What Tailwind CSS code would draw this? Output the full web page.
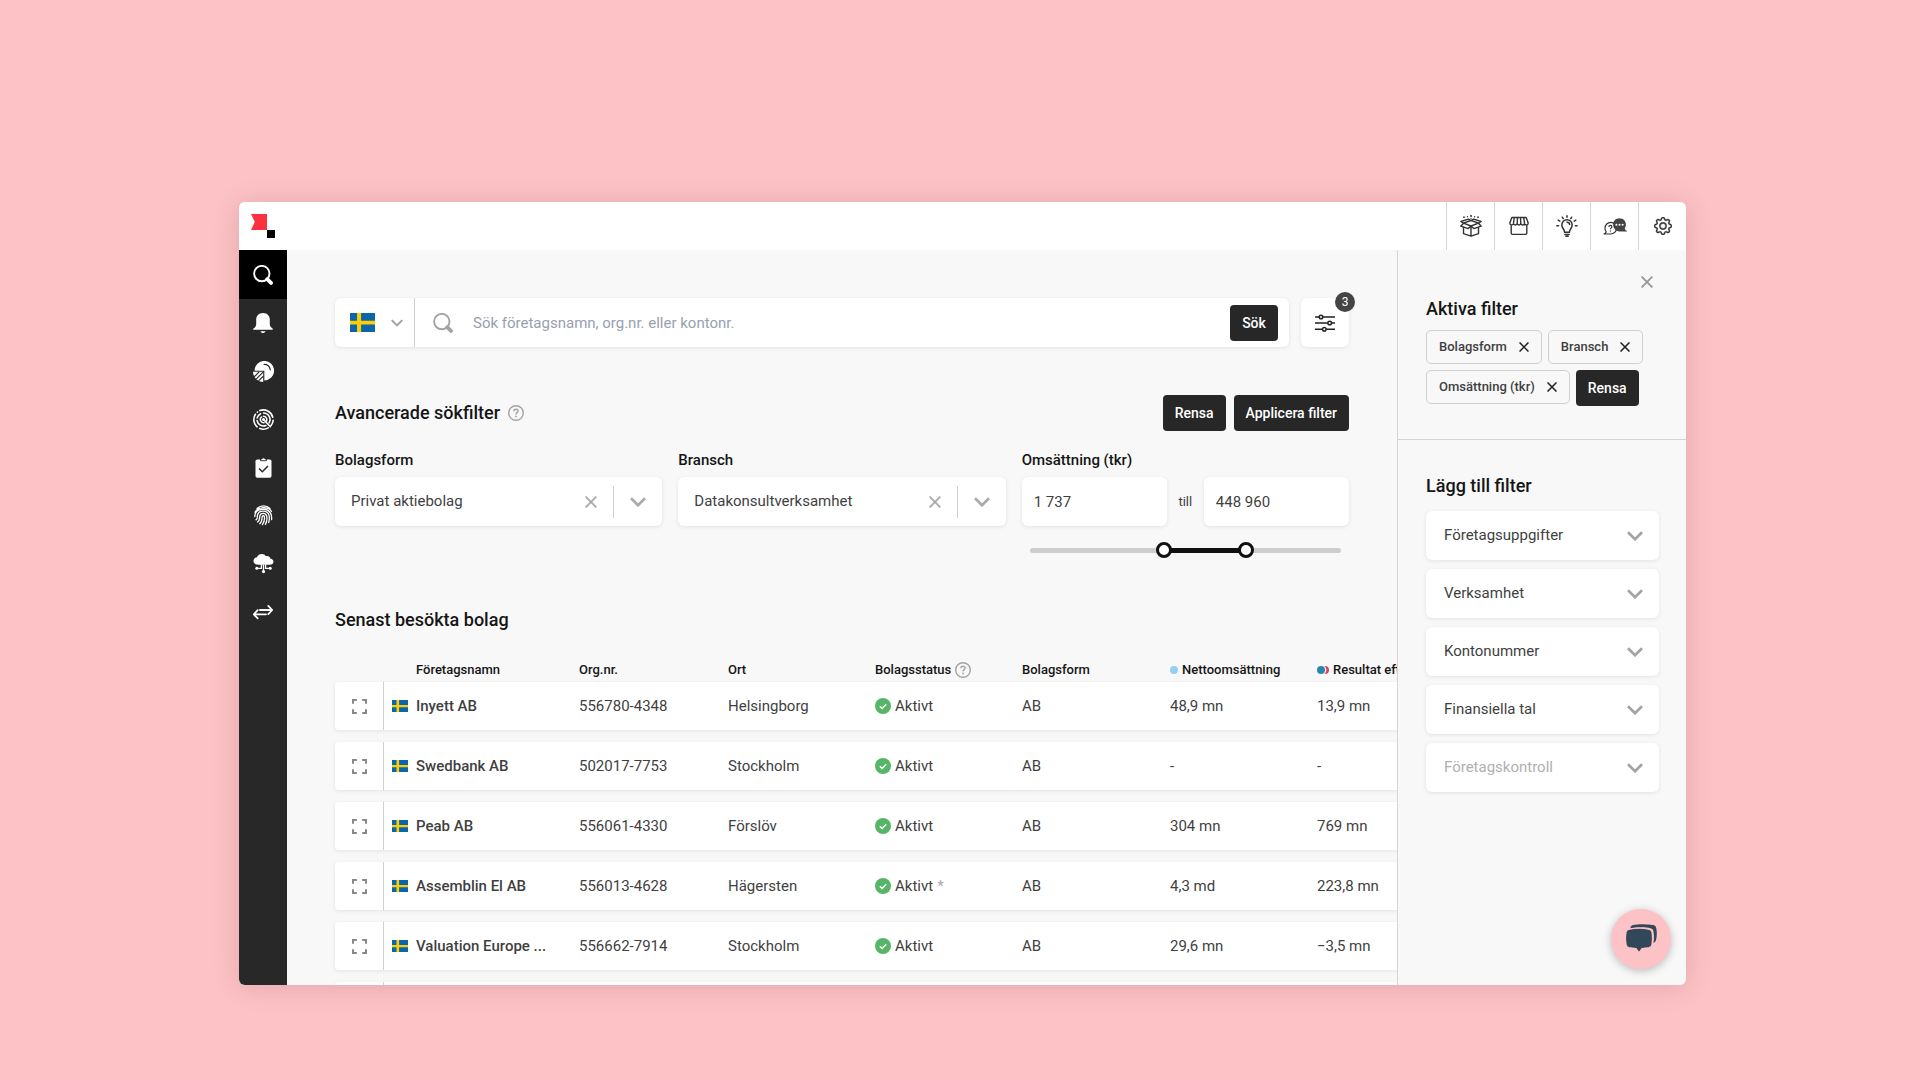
<!DOCTYPE html>
<html lang="sv">
<head>
<meta charset="utf-8">
<meta name="viewport" content="width=device-width, initial-scale=1">
<title>Sök företag</title>
<script src="https://cdn.jsdelivr.net/npm/@tailwindcss/browser@4"></script>
</head>
<body class="flex h-screen bg-[#fdc2c6] pt-[202px] pr-[234px] pb-[95px] pl-[239px] font-[Roboto,sans-serif] text-[15px] text-[#3f3f3f]">

<svg class="hidden" aria-hidden="true">
  <symbol id="flag" viewBox="0 0 16 12" preserveAspectRatio="none"><path fill="#0b65ab" d="M0 0h16v12H0z"/><path fill="#fecd05" d="M4.500 0h2.600v12H4.500zM0 4.900h16v2.300H0z"/></symbol>
  <symbol id="search" viewBox="0 0 20 20"><circle cx="8.800" cy="8.600" r="7.700" fill="none" stroke="currentColor" stroke-width="1.900"/><path d="M14.200 14.200 18 17.900" stroke="currentColor" stroke-width="3.800" stroke-linecap="round"/></symbol>
  <symbol id="chev" viewBox="0 0 16 10"><path d="m1 1.200 7 7 7-7" fill="none" stroke="currentColor" stroke-width="2.700"/></symbol>
  <symbol id="x" viewBox="0 0 12 12"><path d="m.6.6 10.800 10.800M11.400.6.6 11.400" fill="none" stroke="currentColor" stroke-width="1.900"/></symbol>
  <symbol id="help" viewBox="0 0 16 16"><circle cx="8" cy="8" r="7.300" fill="none" stroke="currentColor" stroke-width="1.400"/><path d="M5.900 6.300c0-1.300.9-2.100 2.100-2.100s2.100.8 2.100 1.900c0 1.500-2.100 1.600-2.100 3.300" fill="none" stroke="currentColor" stroke-width="1.400"/><circle cx="8" cy="11.400" r=".9" fill="currentColor"/></symbol>
  <symbol id="expand" viewBox="0 0 15 15"><path d="M1 4.800V1h3.800M10.200 1H14v3.800M14 10.200V14h-3.800M4.800 14H1v-3.800" fill="none" stroke="currentColor" stroke-width="2"/></symbol>
  <symbol id="ok" viewBox="0 0 16 16"><circle cx="8" cy="8" r="8" fill="#56b567"/><path d="m4.800 8.200 2.300 2.300 4.100-4.300" fill="none" stroke="#fff" stroke-width="1.500"/></symbol>
</svg>

<div class="flex min-w-0 flex-1 flex-col overflow-hidden rounded-md bg-[#f8f8f8] shadow-[0_2px_28px_rgba(60,0,0,0.14)]">
  <header class="flex h-12 shrink-0 items-stretch justify-between bg-white">
    <a href="#" aria-label="Startsida" class="py-3 pl-3">
      <svg class="size-6" viewBox="0 0 24 24"><path fill="#fa323f" d="M0 0h16v16H0l3.800-8z"/><path d="M16 16h8v8h-8z"/></svg>
    </a>
    <nav class="flex text-[#333]" aria-label="Verktyg">
      <button aria-label="Produkter" class="flex w-12 items-center justify-center border-l border-[#d4d4d4]">
        <svg class="size-[22px]" viewBox="0 0 22 22" fill="none" stroke="currentColor" stroke-width="1.400" stroke-linejoin="round"><path d="M3.500 8.200 11 5.500l7.500 2.700L11 11zM3.500 8.200.8 6.500 8.500 4.200 11 5.500l2.500-1.300 7.700 2.300-2.700 1.700M3.500 8.200.8 11.200l7.400 2.400L11 11l2.800 2.600 7.400-2.400-2.700-3M3.500 12.400v6.200l7.500 2.600 7.500-2.600v-6.200M11 11v10.200"/><g fill="currentColor" stroke="none"><circle cx="4" cy="2.200" r=".9"/><circle cx="7.400" cy="1.700" r=".7"/><circle cx="11" cy="1" r="1"/><circle cx="14.600" cy="1.700" r=".7"/><circle cx="18" cy="2.200" r=".9"/><circle cx="11" cy="3.400" r=".6"/></g></svg>
      </button>
      <button aria-label="Butik" class="flex w-12 items-center justify-center border-l border-[#d4d4d4]">
        <svg class="size-5" viewBox="0 0 20 20" fill="none" stroke="currentColor" stroke-width="1.400" stroke-linejoin="round"><path d="M2.800 1.500h14.400l2 5.500c0 2.500-3.500 2.500-3.700.2-.2 2.300-3.500 2.300-3.700 0-.2 2.300-3.400 2.300-3.600 0-.2 2.300-3.500 2.300-3.700 0C4.300 9.500.8 9.500.8 7zM5.300 1.500 4.500 7.200M8.500 1.500l-.3 5.700M11.500 1.500l.3 5.700M14.700 1.500l.8 5.700M2.200 8.800v8.300c0 .8.500 1.300 1.300 1.300h13c.8 0 1.300-.5 1.300-1.300V8.800"/></svg>
      </button>
      <button aria-label="Tips" class="flex w-12 items-center justify-center border-l border-[#d4d4d4]">
        <svg class="size-[22px]" viewBox="0 0 22 22" fill="none" stroke="currentColor" stroke-width="1.500" stroke-linecap="round"><path d="M8.600 17.200c0-3.200-2.800-3.800-2.800-7.200a5.200 5.200 0 0 1 10.400 0c0 3.400-2.800 4-2.800 7.200zM8.900 19.500h4.200M9.900 21.300h2.200M11 7.200c1.500 0 2.500.9 2.700 2.300M11 .8v1.500M6.300 2.200l.9 1.400M15.700 2.200l-.9 1.400M2.200 5.200l1.600.9M19.800 5.200l-1.600.9M.9 10.800h1.700M19.400 10.800h1.700"/></svg>
      </button>
      <button aria-label="Support" class="flex w-12 items-center justify-center border-l border-[#d4d4d4]">
        <svg class="h-[17px] w-6" viewBox="0 0 24 17"><path d="M1 16h6.500c3.500 0 6-2.500 6-5.700S11 4.300 7.800 4.300 2 6.900 2 10.200c0 1.500.4 2.700 1.200 3.700C2.700 15 2 15.600 1 16z" fill="#fff" stroke="currentColor" stroke-width="1.200" stroke-linejoin="round"/><path d="M5.900 8.900c0-1 .7-1.600 1.500-1.600s1.500.6 1.500 1.400c0 1.100-1.500 1.200-1.500 2.500M7.400 12.400v1.100" fill="none" stroke="currentColor" stroke-width="1.200"/><path d="M16.500.3c3.600 0 6.400 2.800 6.400 6.300 0 1.500-.5 2.800-1.200 3.800.4 1.200 1.200 1.900 2.300 2.500v.5h-7.500c-3.600 0-6.400-3-6.400-6.800 0-3.500 2.800-6.300 6.400-6.300z" fill="#444"/><g fill="#fff"><circle cx="13.400" cy="6.800" r="1"/><circle cx="16.500" cy="6.800" r="1"/><circle cx="19.600" cy="6.800" r="1"/></g></svg>
      </button>
      <button aria-label="Inställningar" class="flex w-12 items-center justify-center border-l border-[#d4d4d4]">
        <svg class="size-[18px]" viewBox="0 0 16 16" fill="currentColor" stroke="currentColor" stroke-width=".4"><path d="M8 4.754a3.246 3.246 0 1 0 0 6.492 3.246 3.246 0 0 0 0-6.492zM5.754 8a2.246 2.246 0 1 1 4.492 0 2.246 2.246 0 0 1-4.492 0z"/><path d="M9.796 1.343c-.527-1.790-3.065-1.790-3.592 0l-.094.319a.873.873 0 0 1-1.255.52l-.292-.16c-1.640-.892-3.433.902-2.540 2.541l.159.292a.873.873 0 0 1-.52 1.255l-.319.094c-1.790.527-1.790 3.065 0 3.592l.319.094a.873.873 0 0 1 .52 1.255l-.16.292c-.892 1.640.901 3.434 2.541 2.540l.292-.159a.873.873 0 0 1 1.255.52l.094.319c.527 1.790 3.065 1.790 3.592 0l.094-.319a.873.873 0 0 1 1.255-.52l.292.16c1.640.893 3.434-.902 2.540-2.541l-.159-.292a.873.873 0 0 1 .52-1.255l.319-.094c1.790-.527 1.790-3.065 0-3.592l-.319-.094a.873.873 0 0 1-.52-1.255l.16-.292c.893-1.640-.902-3.433-2.541-2.540l-.292.159a.873.873 0 0 1-1.255-.52l-.094-.319zm-2.633.283c.246-.835 1.428-.835 1.674 0l.094.319a1.873 1.873 0 0 0 2.693 1.115l.291-.16c.764-.415 1.600.42 1.184 1.185l-.159.292a1.873 1.873 0 0 0 1.116 2.692l.318.094c.835.246.835 1.428 0 1.674l-.319.094a1.873 1.873 0 0 0-1.115 2.693l.16.291c.415.764-.42 1.600-1.185 1.184l-.291-.159a1.873 1.873 0 0 0-2.693 1.116l-.094.318c-.246.835-1.428.835-1.674 0l-.094-.319a1.873 1.873 0 0 0-2.692-1.115l-.292.16c-.764.415-1.600-.42-1.184-1.185l.159-.291A1.873 1.873 0 0 0 1.945 8.930l-.319-.094c-.835-.246-.835-1.428 0-1.674l.319-.094A1.873 1.873 0 0 0 3.060 4.377l-.16-.292c-.415-.764.42-1.600 1.185-1.184l.292.159a1.873 1.873 0 0 0 2.692-1.115l.094-.319z"/></svg>
      </button>
    </nav>
  </header>

  <div class="flex min-h-0 flex-1">
    <nav class="flex w-12 shrink-0 flex-col bg-[#282828] text-white" aria-label="Huvudmeny">
      <a href="#" aria-label="Sök" class="flex h-[49px] items-center justify-center bg-black"><svg class="size-5"><use href="#search"/></svg></a>
      <a href="#" aria-label="Bevakningar" class="flex h-12 items-center justify-center">
        <svg class="size-5" viewBox="0 0 20 20" fill="currentColor"><path d="M10 0c4.300 0 6.800 2.800 6.800 6.800v4.500c0 2 1.200 3.200 2.500 4 .9.600.7 1.500-.3 1.500H1c-1 0-1.200-.9-.3-1.500 1.300-.8 2.500-2 2.500-4V6.800C3.200 2.800 5.700 0 10 0zM7.500 18.200h5c-.4 1.200-1.300 1.800-2.500 1.800s-2.100-.6-2.500-1.800z"/></svg>
      </a>
      <a href="#" aria-label="Analys" class="flex h-12 items-center justify-center">
        <svg class="size-[21px]" viewBox="0 0 20 20"><path d="M1.500 9.200A9.300 9.300 0 1 1 10.800 18.500V9.200z" fill="currentColor"/><path d="M10.500 3.200c3.200 0 5.400 2 6 5.200" fill="none" stroke="#282828" stroke-width="1.100" stroke-linecap="round"/><path d="M0 10.300h9.700V20C4.500 20 0 15.500 0 10.300z" fill="currentColor"/><path d="m1.200 15 4.600-4.600M3 17.200l6.600-6.600M5.300 18.900l4.400-4.400" stroke="#282828" stroke-width="1.100"/></svg>
      </a>
      <a href="#" aria-label="Radar" class="flex h-12 items-center justify-center">
        <svg class="size-[21px]" viewBox="0 0 20 20" fill="none" stroke="currentColor" stroke-width="1.500" stroke-linecap="round"><path d="M6.500 1.500a9.200 9.200 0 0 1 12.300 6.300M19.200 10.800a9.200 9.200 0 0 1-2 4.900M14.500 18a9.200 9.200 0 0 1-8 .5M3.900 17A9.200 9.200 0 0 1 2.300 5M4.200 3l.1-.1M10 3.800a6.200 6.200 0 0 1 5.300 9.400M12.300 15.700A6.200 6.200 0 0 1 3.900 11M4 8.500a6.200 6.200 0 0 1 3.200-4M10 6.900a3.200 3.200 0 0 1 2.800 4.600M10.500 13.100A3.200 3.200 0 0 1 8 7.600M10.200 10.200l6.300 6.700"/><circle cx="10" cy="10" r=".7" fill="currentColor"/></svg>
      </a>
      <a href="#" aria-label="Uppgifter" class="flex h-12 items-center justify-center">
        <svg class="size-[21px]" viewBox="0 0 21 21"><rect x="2.500" y="2.500" width="16" height="18.300" rx="1.800" fill="currentColor"/><path d="M7.500 3.700V2h1.400a1.700 1.700 0 0 1 3.200 0h1.400v1.700z" fill="currentColor" stroke="#282828" stroke-width=".9"/><path d="m6 11.500 3.300 3.200 5.700-5.700" fill="none" stroke="#282828" stroke-width="1.500"/></svg>
      </a>
      <a href="#" aria-label="Identitet" class="flex h-12 items-center justify-center">
        <svg class="size-[21px]" viewBox="0 0 21 21" fill="none" stroke="currentColor" stroke-width="1.300" stroke-linecap="round"><path d="M4 3.400C7.800.1 13.500.1 17 3.400M2 7.300c2.800-5.500 13-6.500 16.500-.8M1.800 11.500c-.1-8.500 12.500-9.500 16-2.900.9 1.900 1 3.700.8 6M3 14.800c2-1 1-2.800 1.500-4.800 1.300-5.200 10-5.200 11.500.2.700 2.800.5 4.800-.3 7.400M4.500 17c2.400-1.500 2-3.700 2.300-6 .7-3.600 6-3.600 6.900 0 .6 2.900.1 5.700-1.300 8.500M6.800 18.700c2.400-2 2.200-4.600 2.300-7 .2-1.300 2-1.300 2.300 0 .4 2.900-.2 5.500-2 8"/></svg>
      </a>
      <a href="#" aria-label="Moln" class="flex h-12 items-center justify-center">
        <svg class="size-[21px]" viewBox="0 0 21 21"><path d="M5.300 11.800C2.400 11.800.5 10.200.5 8s1.600-3.600 3.400-3.700C4.700 2.200 6.600 1 8.800 1c1.800 0 3.200.8 4.100 2.200 2.200-.5 4.200.8 4.600 2.500 1.800.2 3 1.400 3 3 0 1.800-1.500 3.100-3.700 3.100z" fill="currentColor"/><path d="M8.400 11.500v3.800H4M10.500 11.500v6.300M12.600 11.500v3.800H17" fill="none" stroke="currentColor" stroke-width="1.300"/><g fill="currentColor"><circle cx="3.800" cy="15.300" r="1.500"/><circle cx="17.200" cy="15.300" r="1.500"/><circle cx="10.500" cy="18.600" r="1.600"/></g></svg>
      </a>
      <a href="#" aria-label="Överföring" class="flex h-[50px] items-center justify-center">
        <svg class="size-5" viewBox="0 0 20 20" fill="none" stroke="currentColor" stroke-width="1.800" stroke-linecap="round" stroke-linejoin="round"><path d="M7 8h12M15.300 3.900 19.200 8l-3.900 4.100M13 12.300H1M4.700 8.200.8 12.300l3.900 4.100"/></svg>
      </a>
    </nav>

    <main class="min-w-0 flex-1 overflow-hidden pt-12 pl-12">
      <div class="pr-12">
        <form class="flex gap-3" role="search">
          <div class="flex h-[49px] min-w-0 flex-1 items-center rounded-md bg-white shadow-[0_1px_4px_rgba(0,0,0,0.09)]">
            <button type="button" aria-label="Land: Sverige" class="flex h-full w-20 shrink-0 items-center justify-between border-r border-[#d0d0d0] pr-[11px] pl-[15px]">
              <svg class="h-[19px] w-[25px]"><use href="#flag"/></svg>
              <svg class="h-2 w-3 text-[#a0a0a0]"><use href="#chev"/></svg>
            </button>
            <svg class="ml-[18px] size-5 shrink-0 text-[#a3a3a3]"><use href="#search"/></svg>
            <input type="text" aria-label="Sök företag" placeholder="Sök företagsnamn, org.nr. eller kontonr." class="ml-5 h-full min-w-0 flex-1 outline-none placeholder:text-[#98a0b0]">
            <button type="submit" class="mr-[11px] h-9 w-12 shrink-0 rounded bg-[#272727] text-sm font-medium text-white">Sök</button>
          </div>
          <button type="button" aria-label="Filter, 3 aktiva" class="relative flex h-[49px] w-12 items-center justify-center rounded-md bg-white text-[#222] shadow-[0_1px_4px_rgba(0,0,0,0.09)]">
            <svg class="h-[18px] w-5" viewBox="0 0 20 18" fill="#fff" stroke="currentColor" stroke-width="1.500"><path d="M0 3h20M0 9h20M0 15.200h20"/><circle cx="6" cy="3" r="1.800"/><circle cx="14.700" cy="9" r="1.800"/><circle cx="9.300" cy="15.200" r="1.800"/></svg>
            <span class="absolute -top-1.5 -right-1.5 flex size-5 items-center justify-center rounded-full bg-[#444] text-xs text-white">3</span>
          </button>
        </form>

        <section>
          <div class="mt-12 flex items-center">
            <h2 class="text-lg font-medium text-[#151515]">Avancerade sökfilter</h2>
            <svg class="ml-2 size-4 text-[#a3a3a3]"><use href="#help"/></svg>
            <button class="ml-auto h-9 rounded bg-[#272727] px-3 text-sm font-medium text-white">Rensa</button>
            <button class="ml-2 h-9 rounded bg-[#272727] px-3 text-sm font-medium text-white">Applicera filter</button>
          </div>
          <div class="mt-[19px] grid grid-cols-3 gap-4">
            <div>
              <label for="form" class="block leading-5 font-medium text-[#151515]">Bolagsform</label>
              <div class="mt-[7px] flex h-[49px] items-center rounded-md bg-white text-[#aaa] shadow-[0_1px_4px_rgba(0,0,0,0.09)]">
                <select id="form" class="h-full min-w-0 flex-1 appearance-none pl-4 text-[#3f3f3f] outline-none"><option>Privat aktiebolag</option></select>
                <button aria-label="Rensa bolagsform" class="px-4"><svg class="size-3"><use href="#x"/></svg></button>
                <span class="h-8 w-px bg-[#d0d0d0]"></span>
                <svg class="mx-4 h-2.5 w-4"><use href="#chev"/></svg>
              </div>
            </div>
            <div>
              <label for="bransch" class="block leading-5 font-medium text-[#151515]">Bransch</label>
              <div class="mt-[7px] flex h-[49px] items-center rounded-md bg-white text-[#aaa] shadow-[0_1px_4px_rgba(0,0,0,0.09)]">
                <select id="bransch" class="h-full min-w-0 flex-1 appearance-none pl-4 text-[#3f3f3f] outline-none"><option>Datakonsultverksamhet</option></select>
                <button aria-label="Rensa bransch" class="px-4"><svg class="size-3"><use href="#x"/></svg></button>
                <span class="h-8 w-px bg-[#d0d0d0]"></span>
                <svg class="mx-4 h-2.5 w-4"><use href="#chev"/></svg>
              </div>
            </div>
            <div>
              <label for="from" class="block leading-5 font-medium text-[#151515]">Omsättning (tkr)</label>
              <div class="mt-[7px] flex items-center">
                <input id="from" type="text" value="1 737" class="h-[49px] min-w-0 flex-1 rounded-md bg-white px-3 shadow-[0_1px_4px_rgba(0,0,0,0.09)] outline-none">
                <label for="to" class="w-[37px] text-center text-[13px]">till</label>
                <input id="to" type="text" value="448 960" class="h-[49px] min-w-0 flex-1 rounded-md bg-white px-3 shadow-[0_1px_4px_rgba(0,0,0,0.09)] outline-none">
              </div>
              <div class="relative mx-2 mt-4 flex h-4 items-center">
                <span class="h-[5px] w-full rounded-full bg-[#cdcdcd]"></span>
                <span class="absolute h-[5px] bg-[#111]" style="left:43%;right:31%"></span>
                <input type="range" aria-label="Lägsta omsättning" step="0.1" value="42.700" class="pointer-events-none absolute inset-x-0 h-4 w-full appearance-none bg-transparent [&::-webkit-slider-thumb]:pointer-events-auto [&::-webkit-slider-thumb]:size-4 [&::-webkit-slider-thumb]:appearance-none [&::-webkit-slider-thumb]:rounded-full [&::-webkit-slider-thumb]:border-3 [&::-webkit-slider-thumb]:border-[#111] [&::-webkit-slider-thumb]:bg-white">
                <input type="range" aria-label="Högsta omsättning" step="0.1" value="70.500" class="pointer-events-none absolute inset-x-0 h-4 w-full appearance-none bg-transparent [&::-webkit-slider-thumb]:pointer-events-auto [&::-webkit-slider-thumb]:size-4 [&::-webkit-slider-thumb]:appearance-none [&::-webkit-slider-thumb]:rounded-full [&::-webkit-slider-thumb]:border-3 [&::-webkit-slider-thumb]:border-[#111] [&::-webkit-slider-thumb]:bg-white">
              </div>
            </div>
          </div>
        </section>
        <h2 class="mt-[50px] text-lg leading-6 font-medium text-[#151515]">Senast besökta bolag</h2>
      </div>

      <table class="mt-[26px] block w-[1200px]">
        <thead class="block text-[13px] leading-6 text-[#151515]">
          <tr class="grid grid-cols-[49px_195px_149px_147px_147px_148px_147px_1fr] text-left *:font-medium">
            <th aria-label="Öppna"></th>
            <th class="pl-8">Företagsnamn</th>
            <th>Org.nr.</th>
            <th>Ort</th>
            <th class="flex items-center gap-1">Bolagsstatus <svg class="size-4 text-[#a3a3a3]"><use href="#help"/></svg></th>
            <th>Bolagsform</th>
            <th class="flex items-center gap-1"><span class="size-2 rounded-full bg-[#95cff3]"></span>Nettoomsättning</th>
            <th class="flex items-center gap-1"><svg class="h-2 w-3" viewBox="0 0 12 8"><circle cx="8" cy="4" r="4" fill="#e04058"/><circle cx="4.800" cy="4" r="4.600" fill="#f8f8f8"/><circle cx="4" cy="4" r="4" fill="#2b86ac"/></svg>Resultat efter</th>
          </tr>
        </thead>
        <tbody id="rows" class="flex flex-col gap-3"></tbody>
      </table>
    </main>

    <aside class="relative w-[289px] shrink-0 border-l border-[#d4d4d4]">
      <div class="border-b border-[#d4d4d4] pt-[25px] pr-[27px] pb-[33px] pl-7">
        <button aria-label="Stäng" class="mr-1.5 ml-auto flex h-3.5 items-center text-[#999]"><svg class="size-3"><use href="#x"/></svg></button>
        <h2 class="mt-2 text-lg leading-6 font-medium text-[#151515]">Aktiva filter</h2>
        <div class="mt-[9px] flex flex-wrap gap-1.5 text-[13px] font-medium">
          <button class="flex h-[34px] items-center gap-3 rounded-[5px] border border-[#d0d0d0] px-3">Bolagsform <svg class="size-2.5 text-[#222]"><use href="#x"/></svg></button>
          <button class="flex h-[34px] items-center gap-3 rounded-[5px] border border-[#d0d0d0] px-3">Bransch <svg class="size-2.5 text-[#222]"><use href="#x"/></svg></button>
          <button class="flex h-[34px] items-center gap-3 rounded-[5px] border border-[#d0d0d0] px-3">Omsättning (tkr) <svg class="size-2.5 text-[#222]"><use href="#x"/></svg></button>
          <button class="h-9 rounded bg-[#272727] px-3 text-sm text-white">Rensa</button>
        </div>
      </div>
      <div class="pt-[34px] pr-[27px] pl-7">
        <h2 class="text-lg leading-6 font-medium text-[#151515]">Lägg till filter</h2>
        <div id="groups" class="mt-[13px] flex flex-col gap-[9px]"></div>
      </div>
      <button aria-label="Öppna chatt" class="absolute right-[15px] bottom-4 flex size-[60px] items-center justify-center rounded-full bg-[#fdc2c6] shadow-[0_2px_8px_rgba(0,0,0,0.25)]">
        <svg class="h-[30px] w-8" viewBox="0 0 32 30"><path d="M5 4.500C12 3 20 3 25 4.300c1.800.5 2.600 1.200 2.900 3 .8 4 .7 8 0 11.500 1.300-.3 2.300-1.300 2.700-3 .9-4 .9-8.300.2-11.500-.4-2-1.300-2.900-3.200-3.200C21-.1 13-.1 7.500 1 6 1.400 5 2.200 5 4.500z" fill="#33475b" transform="translate(.5)"/><path d="M3.500 5.300c6-1.300 15-1.300 21 0 1.500.3 2.200 1 2.500 2.500.8 4.500.8 8.700 0 13-.3 1.600-1.200 2.500-2.800 2.900-2.300.5-4.700.8-7.200.9L14 29l-3-4.400c-2.500-.1-4.900-.4-7.200-.9C2.200 23.300 1.300 22.400 1 20.800c-.8-4.300-.8-8.500 0-13 .3-1.500 1-2.200 2.500-2.500z" fill="#33475b" stroke="#fdc2c6" stroke-width="1.400"/></svg>
      </button>
    </aside>
  </div>
</div>

<script>
  const companies = [
    ['Inyett AB', '556780-4348', 'Helsingborg', '', '48,9 mn', '13,9 mn'],
    ['Swedbank AB', '502017-7753', 'Stockholm', '', '-', '-'],
    ['Peab AB', '556061-4330', 'Förslöv', '', '304 mn', '769 mn'],
    ['Assemblin El AB', '556013-4628', 'Hägersten', '*', '4,3 md', '223,8 mn'],
    ['Valuation Europe ...', '556662-7914', 'Stockholm', '', '29,6 mn', '−3,5 mn'],
    ['', '', '', '', '', '']
  ];
  document.getElementById('rows').innerHTML = companies.map(([name, org, city, note, sales, result]) => `
    <tr class="grid h-12 grid-cols-[49px_195px_149px_147px_147px_148px_147px_1fr] items-center rounded bg-white shadow-[0_1px_4px_rgba(0,0,0,0.09)]">
      <td class="h-full border-r border-[#d0d0d0]"><button aria-label="Öppna" class="flex size-full items-center justify-center text-[#888]"><svg class="size-[15px]"><use href="#expand"/></svg></button></td>
      <td class="flex items-center gap-2 pl-2 font-medium"><svg class="h-3 w-4"><use href="#flag"/></svg>${name}</td>
      <td>${org}</td><td>${city}</td>
      <td class="flex items-center gap-1"><svg class="size-4"><use href="#ok"/></svg>${name && 'Aktivt'}<span class="text-[#aaa]">${note}</span></td>
      <td>${name && 'AB'}</td><td>${sales}</td><td>${result}</td>
    </tr>`).join('');
  document.getElementById('groups').innerHTML = ['Företagsuppgifter', 'Verksamhet', 'Kontonummer', 'Finansiella tal', 'Företagskontroll'].map((label, i) => `
    <button ${i === 4 ? 'disabled' : ''} class="flex h-[49px] items-center justify-between rounded-md bg-white pr-4 pl-[18px] shadow-[0_1px_4px_rgba(0,0,0,0.09)] disabled:text-[#b0b0b0]">${label}<svg class="h-2.5 w-4 text-[#a3a3a3]"><use href="#chev"/></svg></button>`).join('');
</script>
</body>
</html>
